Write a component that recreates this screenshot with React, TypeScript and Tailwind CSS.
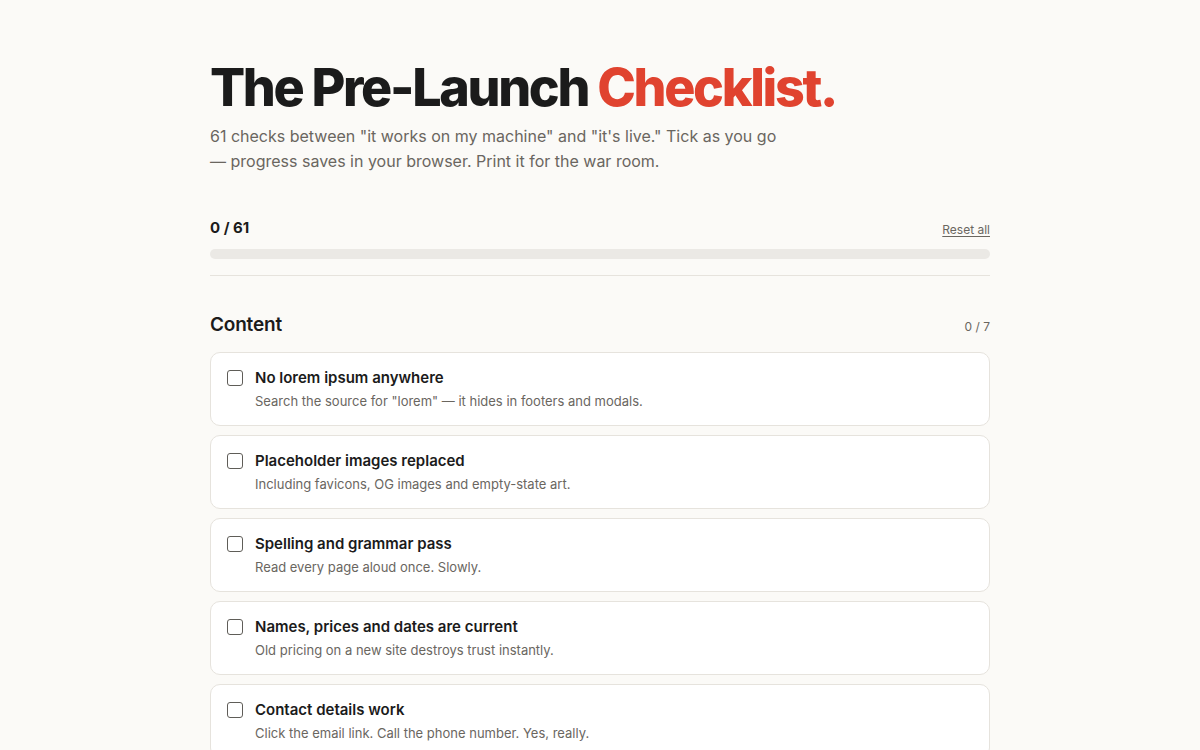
import { useState } from "react";

type Item = { title: string; hint: string };

const content: Item[] = [
  { title: "No lorem ipsum anywhere", hint: 'Search the source for "lorem" — it hides in footers and modals.' },
  { title: "Placeholder images replaced", hint: "Including favicons, OG images and empty-state art." },
  { title: "Spelling and grammar pass", hint: "Read every page aloud once. Slowly." },
  { title: "Names, prices and dates are current", hint: "Old pricing on a new site destroys trust instantly." },
  { title: "Contact details work", hint: "Click the email link. Call the phone number. Yes, really." },
  { title: "404 page says something useful", hint: "Give lost visitors a way back home." },
  { title: "Legal pages are linked", hint: "Privacy, terms and cookies — in the footer, not buried." },
];

const TOTAL = 61;

function CheckRow({ item, checked, onToggle }: { item: Item; checked: boolean; onToggle: () => void }) {
  return (
    <label className="flex cursor-pointer items-start gap-3 rounded-[10px] border border-[#e6e3dd] bg-white px-4 pb-[14px] pt-[14px]">
      <input
        type="checkbox"
        checked={checked}
        onChange={onToggle}
        className="mt-[3px] h-4 w-4 shrink-0 cursor-pointer appearance-none rounded-[3px] border border-[#5f5d58] bg-white checked:border-[#e0432f] checked:bg-[#e0432f]"
      />
      <div>
        <div className="text-[15px] font-semibold leading-[22px] text-[#1b1b1b]">{item.title}</div>
        <div className="mt-[2px] text-[13px] leading-[20px] text-[#6a665f]">{item.hint}</div>
      </div>
    </label>
  );
}

export default function App() {
  const [done, setDone] = useState<Record<number, boolean>>({});
  const count = Object.values(done).filter(Boolean).length;
  const sectionCount = content.filter((_, i) => done[i]).length;

  return (
    <div className="min-h-screen bg-[#fbfaf7] font-['Inter',sans-serif] text-[#1b1b1b]">
      <div className="mx-auto w-[780px] pb-16 pt-[59px]">
        <h1 className="text-[52px] font-extrabold leading-[57px] tracking-[-0.045em] text-[#1b1b1b]">
          The Pre-Launch <span className="text-[#e0432f]">Checklist.</span>
        </h1>
        <p className="mt-[8px] max-w-[572px] text-[16px] leading-[25px] text-[#6a665f]">
          61 checks between "it works on my machine" and "it's live." Tick as you go — progress saves in your
          browser. Print it for the war room.
        </p>

        <div className="mt-[43px] flex items-center justify-between">
          <span className="text-[15px] font-bold leading-[22px]">
            {count} / {TOTAL}
          </span>
          <button
            onClick={() => setDone({})}
            className="mt-[3px] text-[12px] text-[#6a665f] underline underline-offset-2"
          >
            Reset all
          </button>
        </div>
        <div className="mt-[10px] h-[10px] w-full overflow-hidden rounded-full bg-[#ebe9e5]">
          <div className="h-full rounded-full bg-[#e0432f]" style={{ width: `${(count / TOTAL) * 100}%` }} />
        </div>
        <div className="mt-4 border-t border-[#e6e3dd]" />

        <section className="mt-[35px]">
          <div className="mb-[13px] flex items-center justify-between">
            <h2 className="text-[19px] font-semibold leading-[28px] tracking-[-0.01em]">Content</h2>
            <span className="mt-[3px] text-[12px] text-[#6a665f]">
              {sectionCount} / {content.length}
            </span>
          </div>
          <div className="flex flex-col gap-[9px]">
            {content.map((item, i) => (
              <CheckRow
                key={item.title}
                item={item}
                checked={!!done[i]}
                onToggle={() => setDone((d) => ({ ...d, [i]: !d[i] }))}
              />
            ))}
          </div>
        </section>
      </div>
    </div>
  );
}
